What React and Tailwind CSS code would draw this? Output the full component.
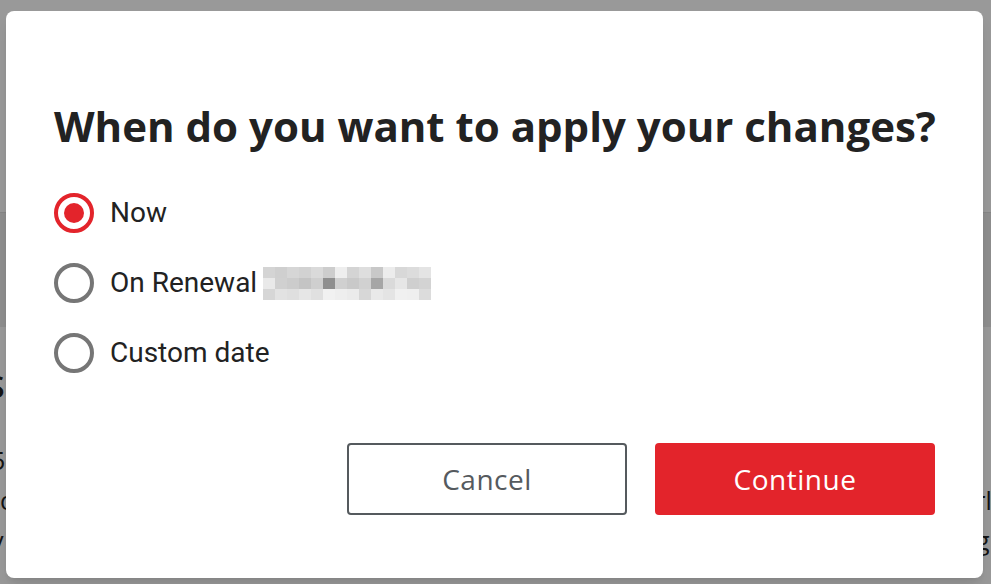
import { useState } from "react"

const options = [
  { id: "now", label: "Now" },
  { id: "renewal", label: "On Renewal", blurred: true },
  { id: "custom", label: "Custom date" },
]

// pixel blocks standing in for the redacted renewal date
const blur = [
  ["#d4d4d4", "#cfcfcf", "#d6d6d6", "#d2d2d2", "#dadada", "#cdcdcd", "#eeeeee", "#d4d4d4", "#dedede", "#c8c8c8", "#ececec", "#d8d8d8", "#dcdcdc", "#e4e4e4"],
  ["#e9e9e9", "#d0d0d0", "#cccccc", "#c4c4c4", "#cfcfcf", "#8f8f8f", "#d0d0d0", "#c9c9c9", "#d1d1d1", "#a6a6a6", "#dadada", "#e6e6e6", "#cfcfcf", "#d3d3d3"],
  ["#d6d6d6", "#e2e2e2", "#dfdfdf", "#e6e6e6", "#e0e0e0", "#f1f1f1", "#eeeeee", "#ebebeb", "#d7d7d7", "#e9e9e9", "#e4e4e4", "#f0f0f0", "#efefef", "#dcdcdc"],
]

function Radio({ checked }) {
  return (
    <span
      className={`flex h-10 w-10 shrink-0 items-center justify-center rounded-full border-4 ${
        checked ? "border-[#e3242b]" : "border-[#767676]"
      }`}
    >
      {checked && <span className="h-5 w-5 rounded-full bg-[#e3242b]" />}
    </span>
  )
}

export default function App() {
  const [value, setValue] = useState("now")

  return (
    <div className="relative h-[584px] w-[991px] overflow-hidden bg-white font-['Open_Sans',sans-serif] text-[#222]">
      {/* Page behind the modal */}
      <div className="h-[213px] border-b border-[#e0e0e0]" />
      <div className="h-[114px] bg-[#ededed]" />
      <div className="pt-[40px]">
        <h2 className="-ml-[12px] whitespace-nowrap text-[30px] font-semibold leading-[40px]">
          Subscription summary
        </h2>
        <div className="-ml-[9px] mt-[33px] whitespace-nowrap text-[25px] leading-[40px]">
          <p>5 users included in your current plan for all of your teams and its members and more users</p>
          <p>to manage every account across the organisation easily each month, and also quarterly,</p>
          <p>y you can change this any time from the settings page of your workspace or the billing page</p>
        </div>
      </div>

      {/* Overlay */}
      <div className="absolute inset-0 bg-black/40" />

      {/* Dialog */}
      <div className="absolute left-[6px] top-[11px] flex h-[567px] w-[977px] flex-col rounded-lg bg-white px-[48px] shadow-lg">
        <h1 className="mt-[85px] whitespace-nowrap text-[42px] font-bold leading-[60px] text-[#222]">
          When do you want to apply your changes?
        </h1>

        <div className="mt-[37px] flex flex-col gap-[30px] font-['Roboto',sans-serif]">
          {options.map((o) => (
            <label
              key={o.id}
              onClick={() => setValue(o.id)}
              className="flex h-10 cursor-pointer items-center gap-4 text-[28px] text-[#222]"
            >
              <Radio checked={value === o.id} />
              <span className="flex items-center gap-[6px]">
                {o.label}
                {o.blurred && (
                  <span className="flex flex-col">
                    {blur.map((row, i) => (
                      <span key={i} className="flex">
                        {row.map((c, j) => (
                          <span key={j} className="h-[11px] w-[12px]" style={{ background: c }} />
                        ))}
                      </span>
                    ))}
                  </span>
                )}
              </span>
            </label>
          ))}
        </div>

        <div className="mt-[70px] flex justify-end gap-[28px]">
          <button className="h-[72px] w-[280px] rounded-[4px] border-2 border-[#555a5e] bg-white text-[28px] tracking-[0.5px] text-[#555a5e]">
            Cancel
          </button>
          <button className="h-[72px] w-[280px] rounded-[4px] bg-[#e3242b] text-[28px] tracking-[0.5px] text-white">
            Continue
          </button>
        </div>
      </div>
    </div>
  )
}
